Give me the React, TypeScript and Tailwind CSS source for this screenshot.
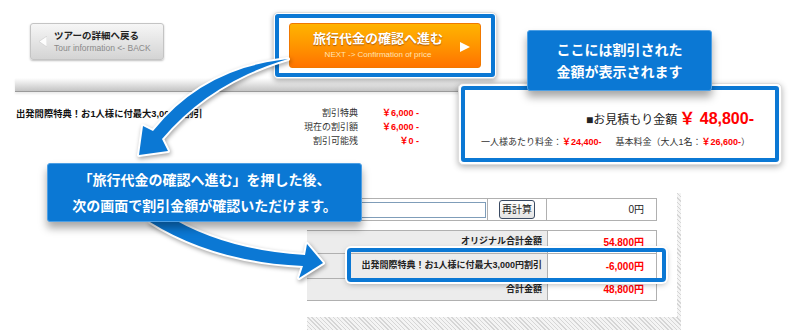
const discountRows = [
  { label: "割引特典", value: "￥6,000 -" },
  { label: "現在の割引額", value: "￥6,000 -" },
  { label: "割引可能残", value: "￥0 -" },
]

const totalRows = [
  { label: "オリジナル合計金額", value: "54,800円", h: "h-[23px]" },
  { label: "出発間際特典！お1人様に付最大3,000円割引", value: "-6,000円", h: "h-[25px]" },
  { label: "合計金額", value: "48,800円", h: "h-[22px]" },
]

export default function App() {
  return (
    <div className="relative h-[333px] w-[799px] overflow-hidden bg-white font-['Liberation_Sans','Noto_Sans_CJK_JP',sans-serif] text-[#222]">
      {/* back button */}
      <div className="h-[78px] pl-[30px] pt-[23px]">
        <div className="flex h-[37px] w-[134px] items-center gap-[7px] rounded-[3px] border border-[#c4c4c4] bg-gradient-to-b from-[#f6f6f6] to-[#d4d4d4] pl-[8px] shadow-[0_1px_2px_rgba(0,0,0,0.25)]">
          <svg width="8" height="11" viewBox="0 0 8 11">
            <polygon points="8,0 8,11 0,5.5" fill="#fdfdfd" stroke="#c9c9c9" strokeWidth="0.6" />
          </svg>
          <div className="flex flex-col leading-none">
            <span className="text-[9.5px] font-bold text-[#222]">ツアーの詳細へ戻る</span>
            <span className="mt-[3px] text-[8.5px] text-[#8a8a8a]">Tour information &lt;- BACK</span>
          </div>
        </div>
      </div>

      {/* gray bar */}
      <div className="ml-[15px] h-[14px] w-[585px] border-b border-[#9a9a9a] bg-gradient-to-b from-white to-[#c4c4c4] shadow-[0_2px_2px_rgba(0,0,0,0.08)]" />

      {/* discount summary */}
      <div className="flex h-[101px] pl-[16px] pt-[14px]">
        <p className="w-[262px] pt-[1px] text-[9.3px] font-bold leading-[14px] text-[#111]">
          出発間際特典！お1人様に付最大3,000円割引
        </p>
        <div className="grid h-fit grid-cols-[80px_61px] text-[9px] leading-[14px]">
          {discountRows.map((r) => (
            <div key={r.label} className="contents">
              <span className="text-right text-[#333]">{r.label}</span>
              <span className="text-right font-bold text-[#f00]">{r.value}</span>
            </div>
          ))}
        </div>
      </div>

      {/* price table */}
      <div className="ml-[307px] flex h-[140px] w-[374px] flex-col">
        <div className="flex h-[124px]">
          <div className="w-[370px] pt-[5px]">
            <div className="flex h-[23px] w-[350px] border-y border-[#b0b0b0] text-[10px]">
              <div className="flex w-[180px] items-center justify-end pr-[1px]">
                <div className="h-[16px] w-[175px] border border-[#7f9db9] bg-white" />
              </div>
              <div className="flex w-[59px] items-center border-l border-[#b0b0b0] pl-[11px]">
                <div className="flex h-[19px] w-[36px] items-center justify-center rounded-[3px] border-[1.5px] border-[#3a4a62] bg-gradient-to-b from-white to-[#e4e4e4] text-[10px] leading-none">
                  再計算
                </div>
              </div>
              <div className="flex flex-1 items-center justify-end border-x border-[#b0b0b0] pr-[12px]">0円</div>
            </div>

            <div className="mt-[9px] w-[350px] border-t border-[#b0b0b0]">
              {totalRows.map((r) => (
                <div key={r.label} className={`flex border-b border-[#b0b0b0] ${r.h}`}>
                  <div className="flex w-[240px] items-center justify-end bg-[#ececec] pr-[5px] text-[9px] font-bold">
                    {r.label}
                  </div>
                  <div className="flex flex-1 items-center justify-end border-x border-[#b0b0b0] pr-[12px] text-[10px] font-bold text-[#f00]">
                    {r.value}
                  </div>
                </div>
              ))}
            </div>
          </div>
          <div className="w-[4px] bg-[repeating-linear-gradient(45deg,#d6d6d6_0px,#d6d6d6_1px,#f4f4f4_1px,#f4f4f4_3px)]" />
        </div>
        <div className="h-[13px] bg-[repeating-linear-gradient(45deg,#d6d6d6_0px,#d6d6d6_1px,#f4f4f4_1px,#f4f4f4_3px)]" />
      </div>

      {/* estimate box */}
      <div className="absolute left-[458px] top-[83px] h-[82px] w-[324px] rounded-[5px] border border-[#ddd] bg-white p-[2px] shadow-[0_2px_6px_rgba(0,0,0,0.3)]">
        <div className="flex h-full flex-col items-end rounded-[3px] border-4 border-[#0b78d4] pr-[21px] pt-[19px]">
          <div className="flex items-baseline leading-[20px]">
            <span className="text-[12px] text-[#222]">■お見積もり金額</span>
            <span className="ml-[2px] text-[16px] font-bold text-[#f00]">￥ 48,800-</span>
          </div>
          <div className="mr-[4px] mt-[5px] text-[9px] leading-[14px] text-[#333]">
            一人様あたり料金：<b className="text-[#f00]">￥24,400-</b>
            <span className="ml-[14px]">基本料金（大人1名：</span>
            <b className="text-[#f00]">￥26,600-</b>）
          </div>
        </div>
      </div>

      {/* callout top right */}
      <div className="absolute left-[527px] top-[30px] flex h-[61px] w-[185px] flex-col items-center justify-center rounded-[3px] border border-[#4d9fe4] bg-[#0b78d4] text-[14px] font-bold leading-[22px] text-white shadow-[0_6px_8px_rgba(0,0,0,0.35)]">
        <span>ここには割引された</span>
        <span>金額が表示されます</span>
      </div>

      {/* next button frame */}
      <div className="absolute left-[273px] top-[12px] rounded-[5px] border border-[#ddd] bg-white p-[1px] shadow-[0_2px_5px_rgba(0,0,0,0.3)]">
        <div className="rounded-[3px] border-4 border-[#0b78d4] bg-white px-[10px] py-[5px]">
          <div className="relative flex h-[45px] w-[192px] flex-col items-center justify-center rounded-[3px] border border-[#f07800] bg-gradient-to-b from-[#ffb400] to-[#ff7300] pr-[14px]">
            <span className="text-[13px] font-bold leading-[16px] text-white [text-shadow:0_1px_1px_rgba(120,50,0,0.6)]">
              旅行代金の確認へ進む
            </span>
            <span className="mt-[3px] text-[8px] leading-[10px] text-[#ffe3b5]">NEXT -&gt; Confirmation of price</span>
            <svg className="absolute right-[10px] top-[18px]" width="10" height="10" viewBox="0 0 10 10">
              <polygon points="0,0 10,5 0,10" fill="#fff" />
            </svg>
          </div>
        </div>
      </div>

      {/* arrows */}
      <svg
        className="absolute left-0 top-0 drop-shadow-[1px_2px_2px_rgba(0,0,0,0.35)]"
        width="799"
        height="333"
        viewBox="0 0 799 333"
      >
        <path
          d="M288 59 Q203 68 153 131 L143 126 L139 155 L168 151 L162 139 Q210 82 288 59 Z"
          fill="#0b78d4"
          stroke="#fff"
          strokeWidth="4"
          strokeLinejoin="round"
          paintOrder="stroke"
        />
        <path
          d="M165 214 Q222 250 305 255 L307 244 L323 263 L299 278 L303 266 Q214 262 150 222 Z"
          fill="#0b78d4"
          stroke="#fff"
          strokeWidth="4"
          strokeLinejoin="round"
          paintOrder="stroke"
        />
      </svg>

      {/* callout middle */}
      <div className="absolute left-[47px] top-[163px] flex h-[59px] w-[315px] flex-col items-center justify-center rounded-[3px] border border-[#4d9fe4] bg-[#0b78d4] text-[14px] font-bold leading-[26px] text-white shadow-[0_6px_8px_rgba(0,0,0,0.35)]">
        <span>「旅行代金の確認へ進む」を押した後、</span>
        <span>次の画面で割引金額が確認いただけます。</span>
      </div>

      {/* highlight on discount row */}
      <div className="absolute left-[347px] top-[248px] h-[34px] w-[319px] rounded-[4px] border-4 border-[#0b78d4] shadow-[0_0_0_2px_#fff,0_2px_6px_rgba(0,0,0,0.35)]" />
    </div>
  )
}
